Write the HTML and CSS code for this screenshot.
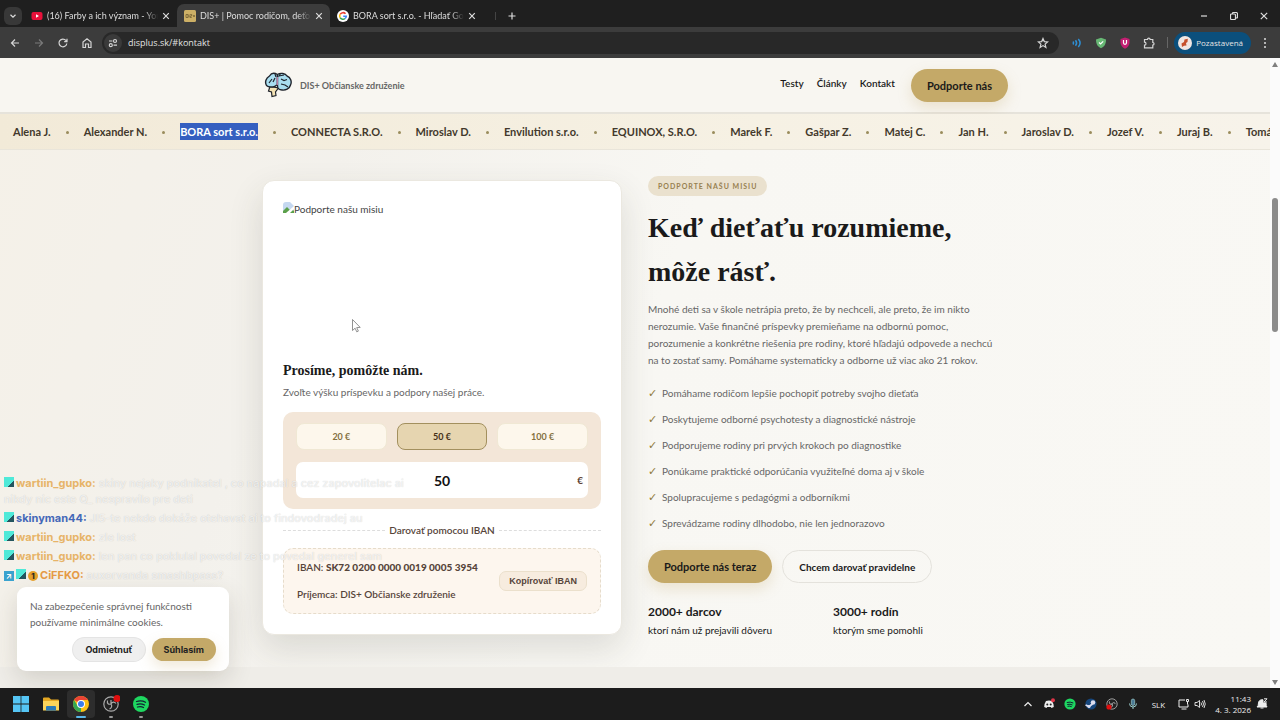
FILE: index.html
```
<!DOCTYPE html>
<html lang="sk">
<head>
    <meta charset="UTF-8">
    <meta name="viewport" content="width=device-width, initial-scale=1.0">
    <title>DIS+ | Pomoc rodičom, deťom</title>
    <link rel="stylesheet" href="styles.css">
</head>
<body>
    <!-- tabs -->
    <div class="tab-strip">
        <button class="tab-search" aria-label="Hľadať karty">
            <svg width="8" height="8" viewBox="0 0 8 8"><path d="M1.5 2.8 4 5.2 6.500 2.800" /></svg>
        </button>
        <div class="tab">
            <svg class="favicon" viewBox="0 0 12 12"><rect x="0.500" y="2" width="11" height="8" rx="2" fill="#e8103a" /><path d="M5 4.200v3.600L8 6z" fill="#fff" /></svg>
            <span class="tab-title">(16) Farby a ich význam - YouTu</span>
            <button class="tab-close" aria-label="Zavrieť"><svg width="8" height="8" viewBox="0 0 8 8"><path d="M1.200 1.200l5.600 5.600M6.800 1.200 1.200 6.800" /></svg></button>
        </div>
        <div class="tab tab-active">
            <svg class="favicon" viewBox="0 0 12 12"><rect width="12" height="12" rx="1.500" fill="#cdb066" /><path d="M2 4.500h2v3H2zM5 4.500v3M6.200 4.500h1.500v1.500H6.200v1.500h1.500M9 6h2M10 5v2" fill="none" stroke="#66552b" stroke-width=".7" /></svg>
            <span class="tab-title">DIS+ | Pomoc rodičom, deťom</span>
            <button class="tab-close" aria-label="Zavrieť"><svg width="8" height="8" viewBox="0 0 8 8"><path d="M1.200 1.200l5.600 5.600M6.800 1.200 1.200 6.800" /></svg></button>
        </div>
        <div class="tab">
            <svg class="favicon" viewBox="0 0 12 12">
                <circle cx="6" cy="6" r="6" fill="#fff" />
                <g fill="none" stroke-width="1.600">
                    <path d="M8.500 3.800A3.300 3.300 0 0 0 3.100 4.400" stroke="#ea4335" />
                    <path d="M3.100 4.400a3.300 3.300 0 0 0 0 3.200" stroke="#fbbc05" />
                    <path d="M3.100 7.600a3.300 3.300 0 0 0 5 .9" stroke="#34a853" />
                    <path d="M8.100 8.500A3.300 3.300 0 0 0 9.300 6.200H6.200" stroke="#4285f4" />
                </g>
            </svg>
            <span class="tab-title">BORA sort s.r.o. - Hľadať Goog</span>
            <button class="tab-close" aria-label="Zavrieť"><svg width="8" height="8" viewBox="0 0 8 8"><path d="M1.200 1.200l5.600 5.600M6.800 1.200 1.200 6.800" /></svg></button>
        </div>
        <button class="tab-new" aria-label="Nová karta">
            <svg width="8" height="8" viewBox="0 0 8 8"><path d="M4 .5v7M.5 4h7" /></svg>
        </button>
        <div class="window-buttons">
            <button aria-label="Minimalizovať"><svg width="8" height="8" viewBox="0 0 8 8"><path d="M1 4h6" /></svg></button>
            <button aria-label="Obnoviť"><svg width="8" height="8" viewBox="0 0 8 8"><rect x=".5" y="2" width="5" height="5.500" rx="1" /><path d="M2.500 2V1.500a1 1 0 0 1 1-1h2.500a1.500 1.500 0 0 1 1.500 1.500v3a1 1 0 0 1-1 1h-1" /></svg></button>
            <button aria-label="Zavrieť okno"><svg width="8" height="8" viewBox="0 0 8 8"><path d="M.8.8l6.400 6.400M7.200.8.800 7.200" /></svg></button>
        </div>
    </div>

    <!-- toolbar -->
    <div class="toolbar">
        <button aria-label="Späť"><svg viewBox="0 0 12 12"><path d="M10 6H2.500M6 2.500 2.500 6 6 9.500" /></svg></button>
        <button class="dim" aria-label="Dopredu"><svg viewBox="0 0 12 12"><path d="M2 6h7.500M6 2.500 9.500 6 6 9.500" /></svg></button>
        <button aria-label="Obnoviť stránku"><svg viewBox="0 0 12 12"><path d="M9.800 6.500A3.900 3.900 0 1 1 8.900 3.400L10 4.500M10 1.800v2.900H7.200" /></svg></button>
        <button aria-label="Domov"><svg viewBox="0 0 12 12"><path d="M2 10.500V5l4-3.300L10 5v5.500H7.500V7h-3v3.500z" /></svg></button>
        <div class="address">
            <span class="site-info"><svg viewBox="0 0 12 12"><path d="M2 4h3.500M6.500 8.200H10" /><circle cx="8" cy="4" r="1.500" /><circle cx="3.800" cy="8.200" r="1.500" /></svg></span>
            <input class="url" type="text" aria-label="Adresa" value="displus.sk/#kontakt">
            <svg class="star" viewBox="0 0 12 12"><path d="M6 1.500 7.300 4.600l3.300.3-2.500 2.200.8 3.300L6 8.600l-2.900 1.800.8-3.300L1.400 4.900l3.300-.3z" /></svg>
        </div>
        <div class="extensions">
            <svg viewBox="0 0 12 12"><path d="M2 4.500q1.200 1.500 0 3M4.500 3.300q2.200 2.700 0 5.400M7.300 2q3.600 4 0 8" stroke="#2d8fd5" stroke-width="1.500" /></svg>
            <svg viewBox="0 0 12 12"><path d="M6 .8 11 2.500c0 4.500-1.500 7-5 8.800C2.500 9.500 1 7 1 2.500z" fill="#67b774" stroke="none" /><path d="M4 5.500 5.600 7 8.200 4.300" stroke="#fff" /></svg>
            <svg viewBox="0 0 12 12"><path d="M6 .5 10.500 2v3.500c0 3-2 5-4.500 6.200C3.500 10.500 1.500 8.500 1.500 5.500V2z" fill="#c31f72" stroke="none" /><path d="M4.500 3v2.800a1.500 1.500 0 0 0 3 0V3" stroke="#fff" /></svg>
            <svg viewBox="0 0 12 12"><path d="M1.500 2.500h3a1.300 1.300 0 0 1 2.600 0h2.700V5.500a1.200 1.200 0 0 1 0 2.500v2.800H1.500V8.200a1.500 1.500 0 0 0 0-3z" /></svg>
        </div>
        <span class="separator"></span>
        <button class="profile">
            <svg viewBox="0 0 14 14"><circle cx="7" cy="7" r="7" fill="#f0e6e2" /><path d="M4 11 3.500 7.500 6 6 6.500 3.500 9.800 2.800 9.500 6 8 7 8.500 9.500 6 9.800z" fill="#c5502c" /></svg>
            Pozastavená
        </button>
        <button class="menu" aria-label="Menu"><svg viewBox="0 0 12 12"><g fill="#ddd" stroke="none"><circle cx="6" cy="2" r="1" /><circle cx="6" cy="6" r="1" /><circle cx="6" cy="10" r="1" /></g></svg></button>
    </div>

    <!-- page -->
    <div class="viewport">
        <div class="page">
            <header class="site-header">
                <div class="container header-inner">
                    <a class="brand" href="#">
                        <svg class="brain" viewBox="0 0 28 26">
                            <path d="M6 14.500 4.500 19l3 1 .5 4.500 4-1L11.500 20l3-4z" fill="#f5e3b4" stroke="#20242c" stroke-width="1.200" />
                            <path d="M13.500 2.500C10 .5 7 1.500 5.500 4 2 6 .5 10 2.500 13.500c2.500 2.500 6 1.500 8 1l3-2z" fill="#a9def0" stroke="#20242c" stroke-width="1.400" />
                            <path d="M13.500 2.500c3-2 8-1 9.500 1.500 4 1.500 5 6 3.500 9-1 4-5 5.500-8.500 5-3 0-4.500-2-4.500-4z" fill="#a9def0" stroke="#20242c" stroke-width="1.400" />
                            <path d="M5 11l3-4M9 10l2-4M17 7l3 1.500 3-1M17 12l4 1 3 2M11 2l1 3M16.500 1.500 15 4l5-1" fill="none" stroke="#20242c" stroke-width="1.200" />
                            <path d="M13.300 5v8" stroke="#b57fa3" stroke-width="1.500" />
                        </svg>
                        <span>DIS+ Občianske združenie</span>
                    </a>
                    <nav class="nav">
                        <a href="#testy">Testy</a>
                        <a href="#clanky">Články</a>
                        <a href="#kontakt">Kontakt</a>
                        <button class="btn btn-gold">Podporte nás</button>
                    </nav>
                </div>
            </header>

            <div class="ticker">
                <span>Alena J.</span>
                <span>Alexander N.</span>
                <span><mark>BORA sort s.r.o.</mark></span>
                <span>CONNECTA S.R.O.</span>
                <span>Miroslav D.</span>
                <span>Envilution s.r.o.</span>
                <span>EQUINOX, S.R.O.</span>
                <span>Marek F.</span>
                <span>Gašpar Z.</span>
                <span>Matej C.</span>
                <span>Jan H.</span>
                <span>Jaroslav D.</span>
                <span>Jozef V.</span>
                <span>Juraj B.</span>
                <span>Tomáš K.</span>
            </div>

            <main class="container support">
                <section class="card">
                    <div class="card-image" role="img" aria-label="Podporte našu misiu">
                        <svg width="11" height="11" viewBox="0 0 11 11"><path d="M0 3a3 3 0 0 1 3-3h4l4 4v7H0z" fill="#c5d8f0" /><path d="M0 11V9l4-4 3 3 2-1 2 2v2z" fill="#5ba04b" /><path d="M3 11 11 4v3l-4 4z" fill="#fff" /></svg>
                        <span>Podporte našu misiu</span>
                    </div>
                    <h3>Prosíme, pomôžte nám.</h3>
                    <p class="card-text">Zvoľte výšku príspevku a podpory našej práce.</p>

                    <div class="amount-panel">
                        <div class="amounts">
                            <button>20 €</button>
                            <button class="selected">50 €</button>
                            <button>100 €</button>
                        </div>
                        <label class="amount-field">
                            <input type="text" value="50" aria-label="Suma">
                            <span>€</span>
                        </label>
                    </div>

                    <div class="divider">Darovať pomocou IBAN</div>

                    <div class="iban-box">
                        <div>
                            <p>IBAN: <strong>SK72 0200 0000 0019 0005 3954</strong></p>
                            <p>Príjemca: DIS+ Občianske združenie</p>
                        </div>
                        <button>Kopírovať IBAN</button>
                    </div>
                </section>

                <section class="mission">
                    <span class="badge">PODPORTE NAŠU MISIU</span>
                    <h1>Keď dieťaťu rozumieme, môže rásť.</h1>
                    <p class="lead">Mnohé deti sa v škole netrápia preto, že by nechceli, ale preto, že im nikto nerozumie. Vaše finančné príspevky premieňame na odbornú pomoc, porozumenie a konkrétne riešenia pre rodiny, ktoré hľadajú odpovede a nechcú na to zostať samy. Pomáhame systematicky a odborne už viac ako 21 rokov.</p>
                    <ul>
                        <li>Pomáhame rodičom lepšie pochopiť potreby svojho dieťaťa</li>
                        <li>Poskytujeme odborné psychotesty a diagnostické nástroje</li>
                        <li>Podporujeme rodiny pri prvých krokoch po diagnostike</li>
                        <li>Ponúkame praktické odporúčania využiteľné doma aj v škole</li>
                        <li>Spolupracujeme s pedagógmi a odborníkmi</li>
                        <li>Sprevádzame rodiny dlhodobo, nie len jednorazovo</li>
                    </ul>
                    <div class="actions">
                        <button class="btn btn-gold">Podporte nás teraz</button>
                        <button class="btn btn-outline">Chcem darovať pravidelne</button>
                    </div>
                    <div class="stats">
                        <div><strong>2000+ darcov</strong><span>ktorí nám už prejavili dôveru</span></div>
                        <div><strong>3000+ rodín</strong><span>ktorým sme pomohli</span></div>
                    </div>
                </section>
            </main>

            <div class="next-section"></div>
        </div>

        <div class="scrollbar"><i class="arrow-up"></i><i class="thumb"></i><i class="arrow-down"></i></div>

        <div class="cookies">
            <p>Na zabezpečenie správnej funkčnosti používame minimálne cookies.</p>
            <div class="cookie-buttons">
                <button>Odmietnuť</button>
                <button class="accept">Súhlasím</button>
            </div>
        </div>

        <!-- stream chat overlay -->
        <div class="chat">
            <p><i class="chat-badge"></i><b class="orange">wartiin_gupko:</b> skiny nejaky podnikatel , co napadal a cez zapovolitelac ai<br>nikdy nic este Q_ nespravilo pre deti</p>
            <p><i class="chat-badge"></i><b class="blue">skinyman44:</b> Jl5-te nekdo dokáže otehavat ai to findovodradej au</p>
            <p><i class="chat-badge"></i><b class="orange">wartiin_gupko:</b> zle lost</p>
            <p><i class="chat-badge"></i><b class="orange">wartiin_gupko:</b> len pan co poklulal povedal ze to povedal generel sam</p>
            <p><i class="chat-badge arrow">↗</i><i class="chat-badge"></i><i class="chat-coin">1</i><b class="amber">CiFFKO:</b> auxorvanda smashbpass?</p>
        </div>

        <svg class="cursor" width="9" height="14" viewBox="0 0 9 14"><path d="M.5.5v11l2.600-2.300 1.700 3.700 1.600-.8-1.700-3.500 3.500-.2z" fill="#fff" stroke="#777" stroke-width=".8" /></svg>
    </div>

    <!-- taskbar -->
    <div class="taskbar">
        <div class="apps">
            <button aria-label="Štart"><svg viewBox="0 0 18 18"><path d="M1 1h7.600v7.600H1zM9.400 1H17v7.600H9.400zM1 9.400h7.600V17H1zM9.400 9.400H17V17H9.400z" fill="#55c5f4" /></svg></button>
            <button aria-label="Prieskumník"><svg viewBox="0 0 18 18"><path d="M1 3.500a1 1 0 0 1 1-1h5l2 2h7a1 1 0 0 1 1 1V8H1z" fill="#e5a823" /><path d="M1 6h16v9.500H1z" fill="#fbd45b" /><path d="M5 11h8a1 1 0 0 1 1 1v3.500H4V12a1 1 0 0 1 1-1z" fill="#2b7ab8" /></svg></button>
            <button class="running active" aria-label="Chrome"><svg viewBox="0 0 18 18"><circle cx="9" cy="9" r="8" fill="#fbc116" /><path d="M9 9 2.100 5A8 8 0 0 1 15.900 5H9z" fill="#ea4335" /><path d="M9 9v8A8 8 0 0 1 2.100 5l3.500 6z" fill="#34a853" /><circle cx="9" cy="9" r="4" fill="#fff" /><circle cx="9" cy="9" r="3" fill="#3b7ded" /></svg></button>
            <button class="running" aria-label="OBS"><svg viewBox="0 0 18 18"><circle cx="9" cy="9" r="7.200" fill="#222" stroke="#aaa" stroke-width="1.200" /><path d="M9 9c-3 1-4-1-3.500-3.500M9 9c1-2.500 3.500-2.500 5-.5M9 9c1.500 2 .5 4-1.500 5M9 9V5" fill="none" stroke="#aaa" stroke-width="1.200" /><circle cx="15" cy="3.500" r="3.500" fill="#e00e0e" /></svg></button>
            <button class="running" aria-label="Spotify"><svg viewBox="0 0 18 18"><circle cx="9" cy="9" r="8" fill="#1ed760" /><path d="M4.500 6.500q5-1.500 9 .8M5 9.300q4-1.200 7.500.7M5.500 12q3.500-1 6 .5" fill="none" stroke="#123" stroke-width="1.300" stroke-linecap="round" /></svg></button>
        </div>
        <div class="tray">
            <svg viewBox="0 0 12 12"><path d="M2.500 8 6 4.500 9.500 8" fill="none" stroke="#eee" stroke-width="1.200" /></svg>
            <svg viewBox="0 0 12 12"><path d="M3 3q3-1 6 0 2 3 1.800 6L8.500 10 7.800 9H4.200l-.7 1L1.200 9Q1 6 3 3z" fill="#eee" /><circle cx="4.300" cy="6.500" r="1" fill="#222" /><circle cx="7.700" cy="6.500" r="1" fill="#222" /><circle cx="10" cy="2.200" r="2" fill="#e13548" /></svg>
            <svg viewBox="0 0 12 12"><circle cx="6" cy="6" r="5.600" fill="#1ed760" /><path d="M2.800 4.500q3.500-1 6.500.5M3.200 6.500q3-.8 5.300.5M3.500 8.300q2.500-.5 4.200.4" fill="none" stroke="#123" /></svg>
            <svg viewBox="0 0 12 12"><circle cx="6" cy="6" r="5.600" fill="#16467c" /><path d="M.6 7 4 8.500 7.500 6" stroke="#dde" stroke-width="1.800" fill="none" /><circle cx="8" cy="4.500" r="2.300" fill="#dde" /><circle cx="4" cy="8.500" r="1.600" fill="#dde" /></svg>
            <svg viewBox="0 0 12 12"><circle cx="6" cy="6" r="5.200" fill="#222" stroke="#bbb" stroke-width=".8" /><path d="M6 6C4 7 3 5 3.500 3.500M6 6c1-2 2.500-1.500 3.500 0M6 6c1 1.500 0 3-1 3.500" fill="none" stroke="#bbb" /><circle cx="3" cy="9" r="2.600" fill="#e00e0e" /></svg>
            <svg viewBox="0 0 12 12"><rect x="4.300" y="1" width="3.400" height="6.500" rx="1.700" fill="#4a7a96" stroke="#9cc" stroke-width=".7" /><path d="M2.500 5.500a3.500 3.500 0 0 0 7 0M6 9v2" fill="none" stroke="#9cc" /></svg>
            <span class="lang">SLK</span>
            <span class="quick">
                <svg viewBox="0 0 12 12"><path d="M7 2H1v7h9V6.500M3.500 11h5M8.500 1.500v2h2v-2zM9.500 3.500v3" fill="none" stroke="#eee" /></svg>
                <svg viewBox="0 0 12 12"><path d="M1 4.500h2l2.500-2v7L3 7.500H1zM7 4.500q1 1.500 0 3M8.500 3q2 3 0 6M10 2q2.500 4 0 8" fill="none" stroke="#eee" stroke-width=".9" /></svg>
            </span>
            <span class="clock">11:43<br>4. 3. 2026</span>
            <svg viewBox="0 0 12 12"><path d="M1 9q1.500-1 1.500-4A3.500 3.500 0 0 1 7 1.800V5h3q0 3 1 4zM4.500 10h3" fill="#eee" stroke="#eee" /><path d="M8 .8h3L8 4h3" stroke="#eee" fill="none" /></svg>
        </div>
    </div>
</body>
</html>
```

FILE: styles.css
```
* {
    box-sizing: border-box;
}

body {
    margin: 0;
    height: 100vh;
    display: flex;
    flex-direction: column;
    overflow: hidden;
    background: #1c1c1c;
    font-family: Lato, sans-serif;
    font-size: 10px;
    color: #1a1a1a;
}

button, input {
    font: inherit;
    color: inherit;
    border: 0;
    padding: 0;
    background: none;
}

a {
    color: inherit;
    text-decoration: none;
}

p, h1, h3, ul {
    margin: 0;
    padding: 0;
}

svg {
    flex: none;
    display: block;
}

/* tabs */
.tab-strip {
    display: flex;
    align-items: center;
    height: 27px;
    padding: 4px 4px 0;
    background: #1f1f1f;
    color: #ddd;
}

.tab-strip svg:not(.favicon) {
    fill: none;
    stroke: #ddd;
    stroke-width: 1.2;
}

.tab-search {
    display: flex;
    align-items: center;
    justify-content: center;
    width: 18px;
    height: 18px;
    margin-right: 2px;
    border-radius: 6px;
    background: #383838;
}

.tab {
    display: flex;
    align-items: center;
    width: 153px;
    height: 23px;
    padding: 0 7px;
    gap: 4px;
    border-radius: 7px 7px 0 0;
}

.tab-active {
    background: #3c3c3c;
}

.favicon {
    width: 12px;
    height: 12px;
}

.tab-title {
    flex: 1;
    min-width: 0;
    overflow: hidden;
    white-space: nowrap;
    font-size: 9px;
    line-height: 16px;
    mask-image: linear-gradient(90deg, #000 88%, transparent);
}

.tab-new {
    margin-left: 12px;
    padding-left: 12px;
    border-left: 1px solid #444;
}

.window-buttons {
    display: flex;
    gap: 22px;
    margin: 0 8px 0 auto;
}

/* toolbar */
.toolbar {
    display: flex;
    align-items: center;
    gap: 12px;
    height: 31px;
    padding: 0 9px;
    background: #3c3c3c;
    color: #e3e3e3;
}

.toolbar svg {
    width: 12px;
    height: 12px;
    fill: none;
    stroke: #d5d5d5;
    stroke-width: 1.2;
}

.toolbar .dim {
    opacity: 0.4;
}

.address {
    flex: 1;
    display: flex;
    align-items: center;
    height: 22px;
    margin-left: -3px;
    padding: 0 10px 0 2px;
    border-radius: 11px;
    background: #282828;
}

.site-info {
    padding: 3px;
    margin-right: 6px;
    border-radius: 50%;
    background: #3a3a3a;
}

.url {
    flex: 1;
    min-width: 0;
    font: 9px/16px 'Open Sans', sans-serif;
}

.extensions {
    display: flex;
    gap: 12px;
}

.separator {
    width: 1px;
    height: 11px;
    background: #666;
}

.toolbar .profile {
    display: flex;
    align-items: center;
    gap: 4px;
    height: 22px;
    margin: 0 -4px 0 -6px;
    padding: 0 8px 0 4px;
    border-radius: 11px;
    background: #0b4f7c;
    font: 8px/16px 'Open Sans', sans-serif;
}

.toolbar .profile svg {
    width: 14px;
    height: 14px;
    stroke: none;
}

/* page */
.viewport {
    position: relative;
    flex: 1;
    display: flex;
    min-height: 0;
    overflow: hidden;
    background: #f8f6f0;
}

.page {
    flex: 1;
    min-width: 0;
    display: flex;
    flex-direction: column;
    background: linear-gradient(110deg, #f5f1e8 0%, #f3f1ec 25%, #f8f7f3 50%, #f9f8f4 100%);
}

.container {
    width: 100%;
    max-width: 746px;
    margin: 0 auto;
}

.site-header {
    border-bottom: 2px solid #e6e3db;
    background: #f8f6f1;
}

.header-inner {
    display: flex;
    align-items: center;
    justify-content: space-between;
    height: 54px;
}

.brand {
    display: flex;
    align-items: center;
    gap: 8px;
    padding-left: 2px;
    color: #666;
    font-size: 9px;
    font-weight: 700;
}

.brain {
    width: 28px;
    height: 26px;
}

.nav {
    display: flex;
    align-items: center;
    gap: 13px;
    font-weight: 600;
}

.nav a {
    padding-bottom: 4px;
}

.nav .btn {
    margin-left: 3px;
}

.btn {
    height: 33px;
    padding: 0 16px;
    border-radius: 17px;
    font-weight: 700;
}

.btn-gold {
    background: #c4a968;
    box-shadow: 0 6px 14px rgba(196, 169, 104, 0.25);
    font-size: 11px;
}

.btn-outline {
    border: 1px solid #e4e2dc;
}

.ticker {
    display: flex;
    height: 36px;
    padding: 0 13px;
    overflow: hidden;
    white-space: nowrap;
    border-bottom: 1px solid #e9e5da;
    background: linear-gradient(90deg, #f2ead8, #f6f1e4 60%, #f7f3ea);
    color: #43392c;
    font-size: 11px;
    font-weight: 700;
    line-height: 34px;
}

.ticker span {
    display: flex;
    align-items: center;
}

.ticker span::after {
    content: "";
    width: 3px;
    height: 3px;
    margin: 2px 15px 0;
    border-radius: 50%;
    background: #9a8c5c;
}

.ticker mark {
    background: #355fc0;
    color: #fff;
    line-height: 17px;
}

.support {
    display: grid;
    grid-template-columns: repeat(2, minmax(0, 1fr));
    gap: 26px;
    align-items: center;
    padding: 26px 0 28px;
}

.next-section {
    flex: 1;
    background: #efede8;
}

/* card */
.card {
    padding: 20px;
    border: 1px solid #ebe8e0;
    border-radius: 12px;
    background: #fff;
    box-shadow: 0 14px 34px rgba(60, 55, 40, 0.14);
}

.card-image {
    display: flex;
    height: 158px;
    line-height: 16px;
    color: #444;
}

.card-image svg {
    margin-top: 1px;
}

h1, h3 {
    font-family: 'Liberation Serif', serif;
    font-weight: 700;
}

.card h3 {
    font-size: 14px;
    line-height: 24px;
}

.card-text {
    line-height: 18px;
    color: #666;
}

.amount-panel {
    margin-top: 11px;
    padding: 11px 13px;
    border-radius: 10px;
    background: #f3e6d8;
}

.amounts {
    display: grid;
    grid-template-columns: 1fr 1fr 1fr;
    gap: 10px;
}

.amounts button {
    height: 27px;
    border: 1px solid #f0e8d4;
    border-radius: 8px;
    background: #fdf7ec;
    color: #84703f;
    font-size: 9px;
    font-weight: 700;
}

.amounts .selected {
    border-color: #a3905e;
    background: #e6d5b0;
    color: #443018;
}

.amount-field {
    display: flex;
    align-items: center;
    height: 36px;
    margin-top: 12px;
    padding: 0 5px;
    border-radius: 7px;
    background: #fff;
    color: #5a4030;
    font-weight: 700;
}

.amount-field input {
    flex: 1;
    min-width: 0;
    padding-left: 6px;
    text-align: center;
    font-size: 14px;
    color: #111;
}

.divider {
    display: flex;
    align-items: center;
    gap: 4px;
    padding: 10px 0 7px;
    color: #56443a;
    font-weight: 600;
    line-height: 22px;
}

.divider::before, .divider::after {
    content: "";
    flex: 1;
    border-top: 1px dashed #ddd;
}

.iban-box {
    display: flex;
    align-items: center;
    justify-content: space-between;
    padding: 5px 13px;
    border: 1px dashed #e6dccb;
    border-radius: 10px;
    background: #fdf6ee;
    color: #56443a;
    font-weight: 600;
    line-height: 27px;
}

.iban-box button {
    height: 20px;
    padding: 0 9px;
    border: 1px solid #ebe0cc;
    border-radius: 7px;
    background: #f7ecdf;
    font: 700 9px 'Liberation Sans', sans-serif;
}

/* mission */
.badge {
    display: inline-block;
    padding: 0 10px;
    border-radius: 10px;
    background: #eae1ce;
    color: #978050;
    font-size: 7px;
    font-weight: 700;
    letter-spacing: 1px;
    line-height: 20px;
}

h1 {
    margin-top: 10px;
    font-size: 28px;
    line-height: 44px;
}

.lead {
    margin-top: 7px;
    padding-right: 5px;
    line-height: 17px;
    color: #666;
}

.mission ul {
    margin-top: 11px;
    list-style: none;
    color: #666;
    line-height: 26px;
}

.mission li::before {
    content: "✓";
    display: inline-block;
    width: 14px;
    color: #8f7a3c;
    font: 700 11px 'DejaVu Sans', sans-serif;
}

.actions {
    display: flex;
    gap: 10px;
    margin-top: 14px;
}

.stats {
    display: grid;
    grid-template-columns: 1fr 1fr;
    gap: 10px;
    margin-top: 20px;
}

.stats strong {
    display: block;
    font-size: 12px;
    line-height: 18px;
}

.stats span {
    line-height: 18px;
}

/* scrollbar */
.scrollbar {
    display: flex;
    flex-direction: column;
    align-items: center;
    width: 10px;
    padding: 4px 0 3px;
    background: #fbfbfb;
}

.thumb {
    width: 6px;
    height: 134px;
    margin: 131px 0 auto;
    border-radius: 3px;
    background: #8b8b8b;
}

.arrow-up, .arrow-down {
    border: 3px solid transparent;
}

.arrow-up {
    border-top: 0;
    border-bottom: 5px solid #808080;
}

.arrow-down {
    border-bottom: 0;
    border-top: 5px solid #808080;
}

/* cookies */
.cookies {
    position: absolute;
    left: 17px;
    bottom: 17px;
    width: 212px;
    padding: 11px 13px 10px;
    border-radius: 9px;
    background: #fff;
    box-shadow: 0 8px 24px rgba(60, 55, 40, 0.16);
    color: #666;
    line-height: 16px;
}

.cookie-buttons {
    display: flex;
    justify-content: flex-end;
    gap: 7px;
    margin-top: 8px;
}

.cookie-buttons button {
    height: 23px;
    padding: 0 12px;
    border-radius: 12px;
    background: #efefef;
    box-shadow: 0 0 0 1px #e4e4e4;
    color: #222;
    font: 700 9px Inter, sans-serif;
}

.cookie-buttons .accept {
    background: #c4a968;
    box-shadow: 0 6px 14px rgba(196, 169, 104, 0.25);
}

/* chat */
.chat {
    position: absolute;
    left: 4px;
    bottom: 105px;
    color: rgba(255, 255, 255, 0.7);
    font: 500 11px/16px Inter, sans-serif;
    text-shadow: 0 0 1px rgba(0, 0, 0, 0.2);
    white-space: nowrap;
}

.chat p {
    margin-top: 3px;
}

.chat b {
    font-weight: 700;
    text-shadow: none;
}

.chat .orange { color: #e7b468; }
.chat .blue { color: #4468b8; }
.chat .amber { color: #e59a45; }

.chat-badge, .chat-coin {
    display: inline-block;
    width: 10px;
    height: 10px;
    margin-right: 2px;
    vertical-align: 0;
    color: #fff;
    font: 700 8px/10px Inter, sans-serif;
    text-align: center;
}

.chat-badge {
    background: linear-gradient(135deg, #4fe9d8 65%, #24555f 65%);
}

.chat-badge.arrow {
    background: #3aa3cf;
}

.chat-coin {
    border-radius: 50%;
    background: #e5a02c;
    color: #222;
}

.cursor {
    position: absolute;
    left: 352px;
    top: 261px;
}

/* taskbar */
.taskbar {
    display: flex;
    align-items: center;
    justify-content: space-between;
    height: 32px;
    padding: 0 12px 0 7px;
    background: #1c1c1c;
    color: #eee;
    font: 8px/11px 'Open Sans', sans-serif;
}

.apps, .tray, .quick {
    display: flex;
    align-items: center;
}

.apps button {
    position: relative;
    width: 28px;
    height: 28px;
    margin-right: 2px;
    padding: 5px;
    border-radius: 4px;
}

.apps svg {
    width: 18px;
    height: 18px;
}

.apps .active {
    background: #2d2d2d;
}

.running::after {
    content: "";
    position: absolute;
    left: 12px;
    bottom: 0;
    width: 4px;
    height: 2px;
    border-radius: 1px;
    background: #999;
}

.active::after {
    left: 9px;
    width: 10px;
    background: #5ab7ea;
}

.tray {
    gap: 9px;
}

.tray svg {
    width: 12px;
    height: 12px;
}

.quick {
    gap: 4px;
}

.lang {
    margin: 0 4px;
}

.clock {
    margin-right: -4px;
    text-align: right;
}
```
